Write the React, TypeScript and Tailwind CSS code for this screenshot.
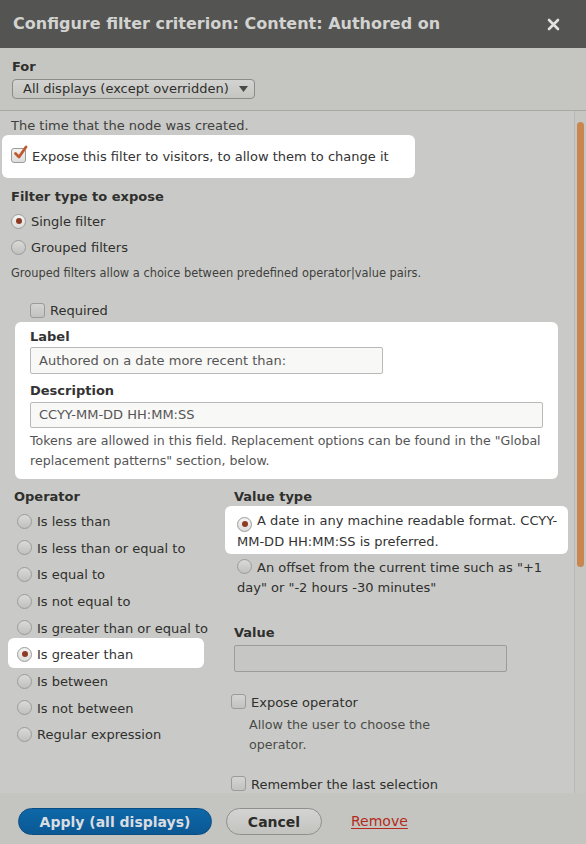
import React from "react";

const Radio = ({ checked = false }: { checked?: boolean }) => (
  <span
    className={`inline-flex shrink-0 w-[15px] h-[15px] rounded-full border border-[#9b9c99] items-center justify-center align-[-2px] ${
      checked
        ? "bg-gradient-to-b from-[#f4f4f2] to-[#dcdcda]"
        : "bg-gradient-to-b from-[#dadad8] to-[#c0c1be]"
    }`}
  >
    {checked && <span className="w-[6px] h-[6px] rounded-full bg-[#8d3b22]" />}
  </span>
);

const Checkbox = ({ checked = false }: { checked?: boolean }) => (
  <span
    className={`relative inline-block shrink-0 w-[15px] h-[15px] rounded-[3px] border border-[#9b9c99] ${
      checked
        ? "bg-gradient-to-b from-[#f4f4f2] to-[#dddddb]"
        : "bg-gradient-to-b from-[#d4d4d2] to-[#c2c3c0]"
    }`}
  >
    {checked && (
      <svg
        className="absolute left-[1px] top-[-4px]"
        width="15"
        height="15"
        viewBox="0 0 15 15"
        fill="none"
      >
        <path
          d="M2.5 8.5 L6 12 L13 2"
          stroke="#bd5a31"
          strokeWidth="2.8"
          strokeLinecap="round"
          strokeLinejoin="round"
        />
      </svg>
    )}
  </span>
);

const operators = [
  "Is less than",
  "Is less than or equal to",
  "Is equal to",
  "Is not equal to",
  "Is greater than or equal to",
  "Is greater than",
  "Is between",
  "Is not between",
  "Regular expression",
];

export default function App() {
  return (
    <div className="w-[586px] h-[844px] flex flex-col overflow-hidden bg-[#c9cac7] text-[13px] text-[#2f2f2d] font-['DejaVu_Sans',sans-serif]">
      {/* Title bar */}
      <div className="h-[48px] shrink-0 bg-[#545452] flex items-center justify-between pl-[13px] pr-[26px]">
        <h1 className="text-[16px] font-bold text-[#d2d3d0] leading-[20px]">
          Configure filter criterion: Content: Authored on
        </h1>
        <svg width="13" height="13" viewBox="0 0 13 13">
          <path
            d="M2 2 L11 11 M11 2 L2 11"
            stroke="#e2e3e0"
            strokeWidth="2.6"
            strokeLinecap="round"
          />
        </svg>
      </div>

      {/* Display selector */}
      <div className="h-[63px] shrink-0 bg-[#c5c6c2] border-b border-[#a8a9a5] pl-[12px]">
        <div className="pt-[11px] font-bold leading-[16px]">For</div>
        <div className="mt-[4px] inline-flex items-center h-[20px] pl-[10px] pr-[6px] gap-[10px] rounded-[4px] border border-[#8b8c89] bg-gradient-to-b from-[#d3d4d1] to-[#c4c5c1] text-[13px] leading-[18px]">
          <span>All displays (except overridden)</span>
          <svg width="9" height="6" viewBox="0 0 9 6">
            <path d="M0 0 L9 0 L4.5 6 Z" fill="#4a4a48" />
          </svg>
        </div>
      </div>

      {/* Scroll area */}
      <div className="flex-1 min-h-0 flex">
        <div className="flex-1 overflow-hidden pl-[11px]">
          <p className="mt-[6px] leading-[18px] text-[#3f3f3d]">The time that the node was created.</p>

          <div className="ml-[-9px] w-[413px] h-[43px] bg-white rounded-[6px] pl-[9px] pt-[12px] flex items-start gap-[6px] text-[#333]">
            <span className="pt-[1px]">
              <Checkbox checked />
            </span>
            <span className="leading-[18px] pt-[1px]">
              Expose this filter to visitors, to allow them to change it
            </span>
          </div>

          <div className="mt-[10px] font-bold leading-[18px]">Filter type to expose</div>
          <div className="mt-[2px]">
            <div className="h-[26px] flex items-center gap-[5px]">
              <Radio checked />
              <span className="leading-[18px] mt-[2px]">Single filter</span>
            </div>
            <div className="h-[26px] flex items-center gap-[5px]">
              <Radio />
              <span className="leading-[18px] mt-[2px]">Grouped filters</span>
            </div>
          </div>
          <p className="mt-[5px] text-[11.4px] leading-[16px] text-[#3f3f3d]">
            Grouped filters allow a choice between predefined operator|value pairs.
          </p>

          <div className="mt-[20px] pl-[19px] h-[18px] flex items-center gap-[5px]">
            <Checkbox />
            <span className="leading-[18px] mt-[1px]">Required</span>
          </div>

          <div className="mt-[3px] ml-[4px] w-[543px] bg-white rounded-[6px] pl-[15px] pt-[6px] pb-[8px] text-[#333]">
            <div className="font-bold leading-[18px]">Label</div>
            <div className="mt-[1px] w-[353px] h-[27px] border border-[#b9b9b7] bg-[#f8f8f7] rounded-[2px] flex items-center pl-[8px] text-[#555]">
              Authored on a date more recent than:
            </div>
            <div className="mt-[8px] font-bold leading-[18px]">Description</div>
            <div className="mt-[2px] w-[513px] h-[26px] border border-[#b9b9b7] bg-[#f8f8f7] rounded-[2px] flex items-center pl-[8px] text-[#555]">
              CCYY-MM-DD HH:MM:SS
            </div>
            <p className="mt-[3px] pr-[8px] text-[12.6px] leading-[20px] text-[#555]">
              Tokens are allowed in this field. Replacement options can be found in the "Global
              replacement patterns" section, below.
            </p>
          </div>

          <div className="flex">
            {/* Operator column */}
            <div className="w-[223px] pl-[3px] shrink-0">
              <div className="mt-[9px] font-bold leading-[18px]">Operator</div>
              <div className="mt-[2px]">
                {operators.map((op, i) =>
                  i === 5 ? (
                    <div
                      key={op}
                      className="-ml-[6.5px] pl-[9.5px] w-[196.5px] -mt-[3px] h-[30px] pt-[3px] bg-white rounded-[6px] flex items-center gap-[5px] text-[#333]"
                    >
                      <Radio checked />
                      <span className="leading-[18px] mt-[2px]">{op}</span>
                    </div>
                  ) : (
                    <div key={op} className="h-[26.6px] pl-[3px] flex items-center gap-[5px]">
                      <Radio />
                      <span className="leading-[18px] mt-[2px]">{op}</span>
                    </div>
                  )
                )}
              </div>
            </div>

            {/* Value column */}
            <div className="flex-1">
              <div className="mt-[9px] font-bold leading-[18px]">Value type</div>
              <div className="ml-[-9px] w-[343px] bg-white rounded-[6px] pl-[12px] pr-[9px] pt-[5px] pb-[2px] leading-[20px] text-[#333]">
                <Radio checked />
                <span className="ml-[5px]">
                  A date in any machine readable format. CCYY-MM-DD HH:MM:SS is preferred.
                </span>
              </div>
              <div className="mt-[4px] ml-[3px] pr-[12px] leading-[20px]">
                <Radio />
                <span className="ml-[5px]">
                  An offset from the current time such as "+1 day" or "-2 hours -30 minutes"
                </span>
              </div>

              <div className="mt-[26px] font-bold leading-[18px]">Value</div>
              <div className="mt-[3px] w-[273px] h-[27px] border border-[#9c9d9a] bg-[#c6c7c4] rounded-[2px]" />

              <div className="mt-[21px] -ml-[3px] h-[18px] flex items-center gap-[5px]">
                <Checkbox />
                <span className="leading-[18px] mt-[2px]">Expose operator</span>
              </div>
              <p className="mt-[4px] ml-[15px] w-[205px] text-[12.7px] leading-[20px] text-[#4a4a48]">
                Allow the user to choose the operator.
              </p>

              <div className="mt-[20px] -ml-[3px] h-[18px] flex items-center gap-[5px]">
                <Checkbox />
                <span className="leading-[18px] mt-[2px]">Remember the last selection</span>
              </div>
            </div>
          </div>
        </div>

        {/* Scrollbar */}
        <div className="w-[12px] shrink-0 border-l border-[#b7b8b4] bg-[#c6c7c3] pt-[11px] pl-[2px]">
          <div className="w-[7px] h-[445px] rounded-full bg-[#c9874f]" />
        </div>
      </div>

      {/* Footer buttons */}
      <div className="h-[51px] shrink-0 bg-[#c4c5c1] flex items-start pt-[15px] pl-[18px]">
        <button className="w-[194px] h-[27px] rounded-full bg-gradient-to-b from-[#0e68a8] to-[#0a5894] border border-[#0a4d82] text-[#d9dde2] font-bold text-[14px] leading-[18px]">
          Apply (all displays)
        </button>
        <button className="ml-[14px] w-[96px] h-[27px] rounded-full bg-gradient-to-b from-[#d4d5d2] to-[#c2c3bf] border border-[#8f908d] text-[#2d2d2b] font-bold text-[14px] leading-[18px]">
          Cancel
        </button>
        <a className="ml-[29px] mt-[4px] text-[14px] leading-[18px] text-[#b22b1c] underline underline-offset-2">
          Remove
        </a>
      </div>
    </div>
  );
}
